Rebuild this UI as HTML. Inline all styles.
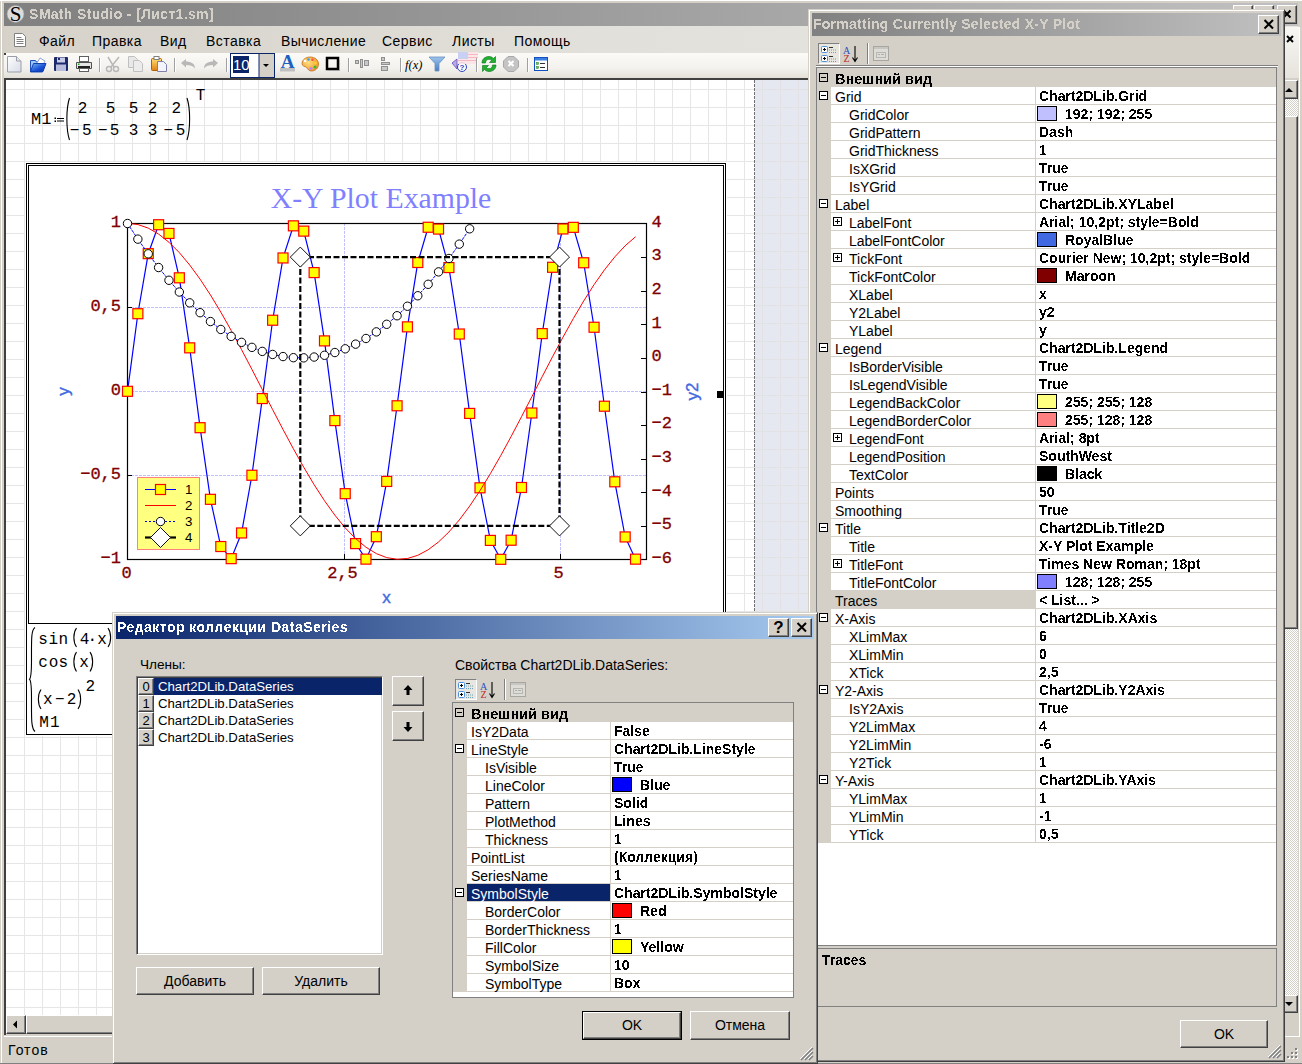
<!DOCTYPE html><html><head><meta charset="utf-8"><style>
*{margin:0;padding:0;box-sizing:border-box}
html,body{width:1302px;height:1064px;overflow:hidden}
body{position:relative;background:#d4d0c8;font-family:"Liberation Sans",sans-serif;font-size:14px;color:#000}
.a{position:absolute}
.t{white-space:pre}
svg{position:absolute;left:0;top:0;overflow:visible}
.t.b{filter:url(#crisp)}
</style></head><body><svg width="0" height="0" style="position:absolute"><defs><filter id="crisp" x="0" y="0" width="100%" height="100%"><feComponentTransfer><feFuncA type="discrete" tableValues="0 1"/></feComponentTransfer></filter><filter id="crisp2" x="0" y="0" width="100%" height="100%"><feComponentTransfer><feFuncA type="discrete" tableValues="0 1 1"/></feComponentTransfer></filter></defs></svg><div class="a" style="left:0px;top:0px;width:1302px;height:1px;background:#fff"></div>
<div class="a" style="left:1px;top:0px;width:1px;height:1064px;background:#fff"></div>
<div class="a" style="left:4px;top:3px;width:1294px;height:23px;background:linear-gradient(to right,#808080,#c0c0c0)"></div>
<svg width="1302" height="40" style="left:0;top:0"><circle cx="15.5" cy="14" r="8.5" fill="#dcdcdc" stroke="#9a9a9a" stroke-width="0.6"/><text x="15.5" y="21" text-anchor="middle" font-family="Liberation Serif" font-size="21" fill="#000">S</text></svg>
<div class="a t b" style="left:29px;top:5px;height:19px;line-height:19px;font-size:14px;font-weight:bold;letter-spacing:0.35px;color:#d4d0c8">SMath Studio - [Лист1.sm]</div>
<div class="a" style="left:1233px;top:5px;width:20px;height:19px;background:#d4d0c8;border-top:1px solid #fff;border-left:1px solid #fff;border-right:1px solid #404040;border-bottom:1px solid #404040;box-shadow:inset -1px -1px 0 #808080, inset 1px 1px 0 #d4d0c8;"></div>
<div class="a" style="left:1254px;top:5px;width:20px;height:19px;background:#d4d0c8;border-top:1px solid #fff;border-left:1px solid #fff;border-right:1px solid #404040;border-bottom:1px solid #404040;box-shadow:inset -1px -1px 0 #808080, inset 1px 1px 0 #d4d0c8;"></div>
<div class="a" style="left:1277px;top:5px;width:20px;height:19px;background:#d4d0c8;border-top:1px solid #fff;border-left:1px solid #fff;border-right:1px solid #404040;border-bottom:1px solid #404040;box-shadow:inset -1px -1px 0 #808080, inset 1px 1px 0 #d4d0c8;"></div>
<svg width="1302" height="40" style="left:0;top:0"><path d="M1283.5,10.5 L1290.5,17.5 M1290.5,10.5 L1283.5,17.5" stroke="#000" stroke-width="2"/></svg>
<div class="a" style="left:4px;top:26px;width:1294px;height:27px;background:linear-gradient(to right,#d6d2ca,#e2e0da 45%,#e8e6e1)"></div>
<div class="a t" style="left:39px;top:32px;height:18px;line-height:18px;font-size:14px;letter-spacing:0.45px">Файл</div>
<div class="a t" style="left:92px;top:32px;height:18px;line-height:18px;font-size:14px;letter-spacing:0.45px">Правка</div>
<div class="a t" style="left:160px;top:32px;height:18px;line-height:18px;font-size:14px;letter-spacing:0.45px">Вид</div>
<div class="a t" style="left:206px;top:32px;height:18px;line-height:18px;font-size:14px;letter-spacing:0.45px">Вставка</div>
<div class="a t" style="left:281px;top:32px;height:18px;line-height:18px;font-size:14px;letter-spacing:0.45px">Вычисление</div>
<div class="a t" style="left:382px;top:32px;height:18px;line-height:18px;font-size:14px;letter-spacing:0.45px">Сервис</div>
<div class="a t" style="left:452px;top:32px;height:18px;line-height:18px;font-size:14px;letter-spacing:0.45px">Листы</div>
<div class="a t" style="left:514px;top:32px;height:18px;line-height:18px;font-size:14px;letter-spacing:0.45px">Помощь</div>
<svg width="30" height="60" style="left:0;top:0"><path d="M14.5 33.5h8l3 3v10h-11z" fill="#fff" stroke="#808080"/><path d="M16.5 37.5h5M16.5 39.5h7M16.5 41.5h7M16.5 43.5h7" stroke="#808080"/></svg>
<div class="a" style="left:4px;top:53px;width:1294px;height:25px;background:linear-gradient(#fbfaf7,#f3f2ee 60%,#e2dfd7)"></div>
<div class="a" style="left:4px;top:78px;width:805px;height:957px;background:#fff;border-top:2px solid #404040;border-left:2px solid #404040"></div>
<svg width="1302" height="1064" style="left:0;top:0"><rect x="755" y="80" width="54" height="935" fill="#e5e8f1"/><rect x="24" y="80" width="1" height="935" fill="#e6e6e6"/><rect x="42" y="80" width="1" height="935" fill="#e6e6e6"/><rect x="60" y="80" width="1" height="935" fill="#e6e6e6"/><rect x="78" y="80" width="1" height="935" fill="#e6e6e6"/><rect x="96" y="80" width="1" height="935" fill="#e6e6e6"/><rect x="114" y="80" width="1" height="935" fill="#e6e6e6"/><rect x="132" y="80" width="1" height="935" fill="#e6e6e6"/><rect x="150" y="80" width="1" height="935" fill="#e6e6e6"/><rect x="168" y="80" width="1" height="935" fill="#e6e6e6"/><rect x="186" y="80" width="1" height="935" fill="#e6e6e6"/><rect x="204" y="80" width="1" height="935" fill="#e6e6e6"/><rect x="222" y="80" width="1" height="935" fill="#e6e6e6"/><rect x="240" y="80" width="1" height="935" fill="#e6e6e6"/><rect x="258" y="80" width="1" height="935" fill="#e6e6e6"/><rect x="276" y="80" width="1" height="935" fill="#e6e6e6"/><rect x="294" y="80" width="1" height="935" fill="#e6e6e6"/><rect x="312" y="80" width="1" height="935" fill="#e6e6e6"/><rect x="330" y="80" width="1" height="935" fill="#e6e6e6"/><rect x="348" y="80" width="1" height="935" fill="#e6e6e6"/><rect x="366" y="80" width="1" height="935" fill="#e6e6e6"/><rect x="384" y="80" width="1" height="935" fill="#e6e6e6"/><rect x="402" y="80" width="1" height="935" fill="#e6e6e6"/><rect x="420" y="80" width="1" height="935" fill="#e6e6e6"/><rect x="438" y="80" width="1" height="935" fill="#e6e6e6"/><rect x="456" y="80" width="1" height="935" fill="#e6e6e6"/><rect x="474" y="80" width="1" height="935" fill="#e6e6e6"/><rect x="492" y="80" width="1" height="935" fill="#e6e6e6"/><rect x="510" y="80" width="1" height="935" fill="#e6e6e6"/><rect x="528" y="80" width="1" height="935" fill="#e6e6e6"/><rect x="546" y="80" width="1" height="935" fill="#e6e6e6"/><rect x="564" y="80" width="1" height="935" fill="#e6e6e6"/><rect x="582" y="80" width="1" height="935" fill="#e6e6e6"/><rect x="600" y="80" width="1" height="935" fill="#e6e6e6"/><rect x="618" y="80" width="1" height="935" fill="#e6e6e6"/><rect x="636" y="80" width="1" height="935" fill="#e6e6e6"/><rect x="654" y="80" width="1" height="935" fill="#e6e6e6"/><rect x="672" y="80" width="1" height="935" fill="#e6e6e6"/><rect x="690" y="80" width="1" height="935" fill="#e6e6e6"/><rect x="708" y="80" width="1" height="935" fill="#e6e6e6"/><rect x="726" y="80" width="1" height="935" fill="#e6e6e6"/><rect x="744" y="80" width="1" height="935" fill="#e6e6e6"/><rect x="762" y="80" width="1" height="935" fill="#e2e2e4"/><rect x="780" y="80" width="1" height="935" fill="#e2e2e4"/><rect x="798" y="80" width="1" height="935" fill="#e2e2e4"/><rect x="6" y="89" width="749" height="1" fill="#e6e6e6"/><rect x="755" y="89" width="54" height="1" fill="#e2e2e4"/><rect x="6" y="107" width="749" height="1" fill="#e6e6e6"/><rect x="755" y="107" width="54" height="1" fill="#e2e2e4"/><rect x="6" y="125" width="749" height="1" fill="#e6e6e6"/><rect x="755" y="125" width="54" height="1" fill="#e2e2e4"/><rect x="6" y="143" width="749" height="1" fill="#e6e6e6"/><rect x="755" y="143" width="54" height="1" fill="#e2e2e4"/><rect x="6" y="161" width="749" height="1" fill="#e6e6e6"/><rect x="755" y="161" width="54" height="1" fill="#e2e2e4"/><rect x="6" y="179" width="749" height="1" fill="#e6e6e6"/><rect x="755" y="179" width="54" height="1" fill="#e2e2e4"/><rect x="6" y="197" width="749" height="1" fill="#e6e6e6"/><rect x="755" y="197" width="54" height="1" fill="#e2e2e4"/><rect x="6" y="215" width="749" height="1" fill="#e6e6e6"/><rect x="755" y="215" width="54" height="1" fill="#e2e2e4"/><rect x="6" y="233" width="749" height="1" fill="#e6e6e6"/><rect x="755" y="233" width="54" height="1" fill="#e2e2e4"/><rect x="6" y="251" width="749" height="1" fill="#e6e6e6"/><rect x="755" y="251" width="54" height="1" fill="#e2e2e4"/><rect x="6" y="269" width="749" height="1" fill="#e6e6e6"/><rect x="755" y="269" width="54" height="1" fill="#e2e2e4"/><rect x="6" y="287" width="749" height="1" fill="#e6e6e6"/><rect x="755" y="287" width="54" height="1" fill="#e2e2e4"/><rect x="6" y="305" width="749" height="1" fill="#e6e6e6"/><rect x="755" y="305" width="54" height="1" fill="#e2e2e4"/><rect x="6" y="323" width="749" height="1" fill="#e6e6e6"/><rect x="755" y="323" width="54" height="1" fill="#e2e2e4"/><rect x="6" y="341" width="749" height="1" fill="#e6e6e6"/><rect x="755" y="341" width="54" height="1" fill="#e2e2e4"/><rect x="6" y="359" width="749" height="1" fill="#e6e6e6"/><rect x="755" y="359" width="54" height="1" fill="#e2e2e4"/><rect x="6" y="377" width="749" height="1" fill="#e6e6e6"/><rect x="755" y="377" width="54" height="1" fill="#e2e2e4"/><rect x="6" y="395" width="749" height="1" fill="#e6e6e6"/><rect x="755" y="395" width="54" height="1" fill="#e2e2e4"/><rect x="6" y="413" width="749" height="1" fill="#e6e6e6"/><rect x="755" y="413" width="54" height="1" fill="#e2e2e4"/><rect x="6" y="431" width="749" height="1" fill="#e6e6e6"/><rect x="755" y="431" width="54" height="1" fill="#e2e2e4"/><rect x="6" y="449" width="749" height="1" fill="#e6e6e6"/><rect x="755" y="449" width="54" height="1" fill="#e2e2e4"/><rect x="6" y="467" width="749" height="1" fill="#e6e6e6"/><rect x="755" y="467" width="54" height="1" fill="#e2e2e4"/><rect x="6" y="485" width="749" height="1" fill="#e6e6e6"/><rect x="755" y="485" width="54" height="1" fill="#e2e2e4"/><rect x="6" y="503" width="749" height="1" fill="#e6e6e6"/><rect x="755" y="503" width="54" height="1" fill="#e2e2e4"/><rect x="6" y="521" width="749" height="1" fill="#e6e6e6"/><rect x="755" y="521" width="54" height="1" fill="#e2e2e4"/><rect x="6" y="539" width="749" height="1" fill="#e6e6e6"/><rect x="755" y="539" width="54" height="1" fill="#e2e2e4"/><rect x="6" y="557" width="749" height="1" fill="#e6e6e6"/><rect x="755" y="557" width="54" height="1" fill="#e2e2e4"/><rect x="6" y="575" width="749" height="1" fill="#e6e6e6"/><rect x="755" y="575" width="54" height="1" fill="#e2e2e4"/><rect x="6" y="593" width="749" height="1" fill="#e6e6e6"/><rect x="755" y="593" width="54" height="1" fill="#e2e2e4"/><rect x="6" y="611" width="749" height="1" fill="#e6e6e6"/><rect x="755" y="611" width="54" height="1" fill="#e2e2e4"/><rect x="6" y="629" width="749" height="1" fill="#e6e6e6"/><rect x="755" y="629" width="54" height="1" fill="#e2e2e4"/><rect x="6" y="647" width="749" height="1" fill="#e6e6e6"/><rect x="755" y="647" width="54" height="1" fill="#e2e2e4"/><rect x="6" y="665" width="749" height="1" fill="#e6e6e6"/><rect x="755" y="665" width="54" height="1" fill="#e2e2e4"/><rect x="6" y="683" width="749" height="1" fill="#e6e6e6"/><rect x="755" y="683" width="54" height="1" fill="#e2e2e4"/><rect x="6" y="701" width="749" height="1" fill="#e6e6e6"/><rect x="755" y="701" width="54" height="1" fill="#e2e2e4"/><rect x="6" y="719" width="749" height="1" fill="#e6e6e6"/><rect x="755" y="719" width="54" height="1" fill="#e2e2e4"/><rect x="6" y="737" width="749" height="1" fill="#e6e6e6"/><rect x="755" y="737" width="54" height="1" fill="#e2e2e4"/><rect x="6" y="755" width="749" height="1" fill="#e6e6e6"/><rect x="755" y="755" width="54" height="1" fill="#e2e2e4"/><rect x="6" y="773" width="749" height="1" fill="#e6e6e6"/><rect x="755" y="773" width="54" height="1" fill="#e2e2e4"/><rect x="6" y="791" width="749" height="1" fill="#e6e6e6"/><rect x="755" y="791" width="54" height="1" fill="#e2e2e4"/><rect x="6" y="809" width="749" height="1" fill="#e6e6e6"/><rect x="755" y="809" width="54" height="1" fill="#e2e2e4"/><rect x="6" y="827" width="749" height="1" fill="#e6e6e6"/><rect x="755" y="827" width="54" height="1" fill="#e2e2e4"/><rect x="6" y="845" width="749" height="1" fill="#e6e6e6"/><rect x="755" y="845" width="54" height="1" fill="#e2e2e4"/><rect x="6" y="863" width="749" height="1" fill="#e6e6e6"/><rect x="755" y="863" width="54" height="1" fill="#e2e2e4"/><rect x="6" y="881" width="749" height="1" fill="#e6e6e6"/><rect x="755" y="881" width="54" height="1" fill="#e2e2e4"/><rect x="6" y="899" width="749" height="1" fill="#e6e6e6"/><rect x="755" y="899" width="54" height="1" fill="#e2e2e4"/><rect x="6" y="917" width="749" height="1" fill="#e6e6e6"/><rect x="755" y="917" width="54" height="1" fill="#e2e2e4"/><rect x="6" y="935" width="749" height="1" fill="#e6e6e6"/><rect x="755" y="935" width="54" height="1" fill="#e2e2e4"/><rect x="6" y="953" width="749" height="1" fill="#e6e6e6"/><rect x="755" y="953" width="54" height="1" fill="#e2e2e4"/><rect x="6" y="971" width="749" height="1" fill="#e6e6e6"/><rect x="755" y="971" width="54" height="1" fill="#e2e2e4"/><rect x="6" y="989" width="749" height="1" fill="#e6e6e6"/><rect x="755" y="989" width="54" height="1" fill="#e2e2e4"/><rect x="6" y="1007" width="749" height="1" fill="#e6e6e6"/><rect x="755" y="1007" width="54" height="1" fill="#e2e2e4"/><line x1="754.5" y1="80" x2="754.5" y2="1015" stroke="#707070" stroke-width="1" stroke-dasharray="3,1"/></svg>
<svg width="1302" height="1064" style="left:0;top:0"><rect x="25" y="162" width="702" height="574" fill="#fff"/><rect x="26.5" y="163.5" width="699" height="571" fill="none" stroke="#000"/><rect x="28.5" y="165.5" width="695" height="458" fill="none" stroke="#000"/><rect x="717" y="391" width="7" height="7" fill="#000"/><text x="381" y="208" text-anchor="middle" font-family="Liberation Serif" font-size="29.8" fill="#8080ff">X-Y Plot Example</text><line x1="344.5" y1="223" x2="344.5" y2="559" stroke="#c0c0ff" stroke-dasharray="3,1"/><line x1="560.5" y1="223" x2="560.5" y2="559" stroke="#c0c0ff" stroke-dasharray="3,1"/><line x1="127" y1="307.5" x2="646" y2="307.5" stroke="#c0c0ff" stroke-dasharray="3,1"/><line x1="127" y1="391.5" x2="646" y2="391.5" stroke="#c0c0ff" stroke-dasharray="3,1"/><line x1="127" y1="475.5" x2="646" y2="475.5" stroke="#c0c0ff" stroke-dasharray="3,1"/><line x1="127" y1="307.5" x2="132" y2="307.5" stroke="#000"/><line x1="127" y1="391.5" x2="132" y2="391.5" stroke="#000"/><line x1="127" y1="475.5" x2="132" y2="475.5" stroke="#000"/><line x1="641" y1="526.5" x2="646" y2="526.5" stroke="#000"/><line x1="641" y1="492.5" x2="646" y2="492.5" stroke="#000"/><line x1="641" y1="459.5" x2="646" y2="459.5" stroke="#000"/><line x1="641" y1="425.5" x2="646" y2="425.5" stroke="#000"/><line x1="641" y1="392.5" x2="646" y2="392.5" stroke="#000"/><line x1="641" y1="358.5" x2="646" y2="358.5" stroke="#000"/><line x1="641" y1="324.5" x2="646" y2="324.5" stroke="#000"/><line x1="641" y1="291.5" x2="646" y2="291.5" stroke="#000"/><line x1="641" y1="257.5" x2="646" y2="257.5" stroke="#000"/><line x1="344.5" y1="554" x2="344.5" y2="559" stroke="#000"/><line x1="560.5" y1="554" x2="560.5" y2="559" stroke="#000"/><rect x="127.5" y="223.5" width="519" height="336" fill="none" stroke="#000" stroke-width="1.2"/><text x="121" y="227.10000000000002" text-anchor="end" font-family="Liberation Mono" font-size="17" fill="#800000" stroke="#800000" stroke-width="0.3">1</text><text x="121" y="311.1" text-anchor="end" font-family="Liberation Mono" font-size="17" fill="#800000" stroke="#800000" stroke-width="0.3">0,5</text><text x="121" y="395.1" text-anchor="end" font-family="Liberation Mono" font-size="17" fill="#800000" stroke="#800000" stroke-width="0.3">0</text><text x="121" y="479.1" text-anchor="end" font-family="Liberation Mono" font-size="17" fill="#800000" stroke="#800000" stroke-width="0.3">−0,5</text><text x="121" y="563.0999999999999" text-anchor="end" font-family="Liberation Mono" font-size="17" fill="#800000" stroke="#800000" stroke-width="0.3">−1</text><text x="651.5" y="562.8" font-family="Liberation Mono" font-size="17" fill="#800000" stroke="#800000" stroke-width="0.3">−6</text><text x="651.5" y="529.2" font-family="Liberation Mono" font-size="17" fill="#800000" stroke="#800000" stroke-width="0.3">−5</text><text x="651.5" y="495.6" font-family="Liberation Mono" font-size="17" fill="#800000" stroke="#800000" stroke-width="0.3">−4</text><text x="651.5" y="462.00000000000006" font-family="Liberation Mono" font-size="17" fill="#800000" stroke="#800000" stroke-width="0.3">−3</text><text x="651.5" y="428.40000000000003" font-family="Liberation Mono" font-size="17" fill="#800000" stroke="#800000" stroke-width="0.3">−2</text><text x="651.5" y="394.8" font-family="Liberation Mono" font-size="17" fill="#800000" stroke="#800000" stroke-width="0.3">−1</text><text x="651.5" y="361.2" font-family="Liberation Mono" font-size="17" fill="#800000" stroke="#800000" stroke-width="0.3">0</text><text x="651.5" y="327.6" font-family="Liberation Mono" font-size="17" fill="#800000" stroke="#800000" stroke-width="0.3">1</text><text x="651.5" y="294.0" font-family="Liberation Mono" font-size="17" fill="#800000" stroke="#800000" stroke-width="0.3">2</text><text x="651.5" y="260.40000000000003" font-family="Liberation Mono" font-size="17" fill="#800000" stroke="#800000" stroke-width="0.3">3</text><text x="651.5" y="226.8" font-family="Liberation Mono" font-size="17" fill="#800000" stroke="#800000" stroke-width="0.3">4</text><text x="126.5" y="578" text-anchor="middle" font-family="Liberation Mono" font-size="17" fill="#800000" stroke="#800000" stroke-width="0.3">0</text><text x="342.5" y="578" text-anchor="middle" font-family="Liberation Mono" font-size="17" fill="#800000" stroke="#800000" stroke-width="0.3">2,5</text><text x="558.5" y="578" text-anchor="middle" font-family="Liberation Mono" font-size="17" fill="#800000" stroke="#800000" stroke-width="0.3">5</text><text x="386.5" y="603" text-anchor="middle" font-family="Liberation Sans" font-size="17" fill="#4169e1" stroke="#4169e1" stroke-width="0.4">x</text><text transform="translate(69,391.5) rotate(-90)" text-anchor="middle" font-family="Liberation Sans" font-size="17" fill="#4169e1" stroke="#4169e1" stroke-width="0.4">y</text><text transform="translate(698,391.5) rotate(-90)" text-anchor="middle" font-family="Liberation Sans" font-size="17" fill="#4169e1" stroke="#4169e1" stroke-width="0.4">y2</text><polyline fill="none" stroke="#0000ff" stroke-width="1.2" points="127.50,391.30 137.87,313.72 148.24,253.68 158.60,224.73 168.97,233.44 179.34,277.82 189.71,347.85 200.08,427.70 210.44,499.32 220.81,546.53 231.18,558.66 241.55,532.96 251.92,475.24 262.28,398.55 272.65,320.23 283.02,257.96 293.39,225.84 303.76,231.11 314.12,272.58 324.49,340.89 334.86,420.59 345.23,493.67 355.60,543.61 365.96,559.13 376.33,536.72 386.70,481.44 397.07,405.79 407.44,326.86 417.80,262.50 428.17,227.25 438.54,229.07 448.91,267.56 459.28,334.01 469.64,413.42 480.01,487.82 490.38,540.41 500.75,559.30 511.12,540.22 521.48,487.48 531.85,413.00 542.22,333.62 552.59,267.28 562.96,228.96 573.32,227.34 583.69,262.77 594.06,327.25 604.43,406.21 614.80,481.80 625.16,536.93 635.53,559.15"/><rect x="122.50" y="386.30" width="10" height="10" fill="#ffff00" stroke="#ff0000" stroke-width="1.2"/><rect x="132.87" y="308.72" width="10" height="10" fill="#ffff00" stroke="#ff0000" stroke-width="1.2"/><rect x="143.24" y="248.68" width="10" height="10" fill="#ffff00" stroke="#ff0000" stroke-width="1.2"/><rect x="153.60" y="219.73" width="10" height="10" fill="#ffff00" stroke="#ff0000" stroke-width="1.2"/><rect x="163.97" y="228.44" width="10" height="10" fill="#ffff00" stroke="#ff0000" stroke-width="1.2"/><rect x="174.34" y="272.82" width="10" height="10" fill="#ffff00" stroke="#ff0000" stroke-width="1.2"/><rect x="184.71" y="342.85" width="10" height="10" fill="#ffff00" stroke="#ff0000" stroke-width="1.2"/><rect x="195.08" y="422.70" width="10" height="10" fill="#ffff00" stroke="#ff0000" stroke-width="1.2"/><rect x="205.44" y="494.32" width="10" height="10" fill="#ffff00" stroke="#ff0000" stroke-width="1.2"/><rect x="215.81" y="541.53" width="10" height="10" fill="#ffff00" stroke="#ff0000" stroke-width="1.2"/><rect x="226.18" y="553.66" width="10" height="10" fill="#ffff00" stroke="#ff0000" stroke-width="1.2"/><rect x="236.55" y="527.96" width="10" height="10" fill="#ffff00" stroke="#ff0000" stroke-width="1.2"/><rect x="246.92" y="470.24" width="10" height="10" fill="#ffff00" stroke="#ff0000" stroke-width="1.2"/><rect x="257.28" y="393.55" width="10" height="10" fill="#ffff00" stroke="#ff0000" stroke-width="1.2"/><rect x="267.65" y="315.23" width="10" height="10" fill="#ffff00" stroke="#ff0000" stroke-width="1.2"/><rect x="278.02" y="252.96" width="10" height="10" fill="#ffff00" stroke="#ff0000" stroke-width="1.2"/><rect x="288.39" y="220.84" width="10" height="10" fill="#ffff00" stroke="#ff0000" stroke-width="1.2"/><rect x="298.76" y="226.11" width="10" height="10" fill="#ffff00" stroke="#ff0000" stroke-width="1.2"/><rect x="309.12" y="267.58" width="10" height="10" fill="#ffff00" stroke="#ff0000" stroke-width="1.2"/><rect x="319.49" y="335.89" width="10" height="10" fill="#ffff00" stroke="#ff0000" stroke-width="1.2"/><rect x="329.86" y="415.59" width="10" height="10" fill="#ffff00" stroke="#ff0000" stroke-width="1.2"/><rect x="340.23" y="488.67" width="10" height="10" fill="#ffff00" stroke="#ff0000" stroke-width="1.2"/><rect x="350.60" y="538.61" width="10" height="10" fill="#ffff00" stroke="#ff0000" stroke-width="1.2"/><rect x="360.96" y="554.13" width="10" height="10" fill="#ffff00" stroke="#ff0000" stroke-width="1.2"/><rect x="371.33" y="531.72" width="10" height="10" fill="#ffff00" stroke="#ff0000" stroke-width="1.2"/><rect x="381.70" y="476.44" width="10" height="10" fill="#ffff00" stroke="#ff0000" stroke-width="1.2"/><rect x="392.07" y="400.79" width="10" height="10" fill="#ffff00" stroke="#ff0000" stroke-width="1.2"/><rect x="402.44" y="321.86" width="10" height="10" fill="#ffff00" stroke="#ff0000" stroke-width="1.2"/><rect x="412.80" y="257.50" width="10" height="10" fill="#ffff00" stroke="#ff0000" stroke-width="1.2"/><rect x="423.17" y="222.25" width="10" height="10" fill="#ffff00" stroke="#ff0000" stroke-width="1.2"/><rect x="433.54" y="224.07" width="10" height="10" fill="#ffff00" stroke="#ff0000" stroke-width="1.2"/><rect x="443.91" y="262.56" width="10" height="10" fill="#ffff00" stroke="#ff0000" stroke-width="1.2"/><rect x="454.28" y="329.01" width="10" height="10" fill="#ffff00" stroke="#ff0000" stroke-width="1.2"/><rect x="464.64" y="408.42" width="10" height="10" fill="#ffff00" stroke="#ff0000" stroke-width="1.2"/><rect x="475.01" y="482.82" width="10" height="10" fill="#ffff00" stroke="#ff0000" stroke-width="1.2"/><rect x="485.38" y="535.41" width="10" height="10" fill="#ffff00" stroke="#ff0000" stroke-width="1.2"/><rect x="495.75" y="554.30" width="10" height="10" fill="#ffff00" stroke="#ff0000" stroke-width="1.2"/><rect x="506.12" y="535.22" width="10" height="10" fill="#ffff00" stroke="#ff0000" stroke-width="1.2"/><rect x="516.48" y="482.48" width="10" height="10" fill="#ffff00" stroke="#ff0000" stroke-width="1.2"/><rect x="526.85" y="408.00" width="10" height="10" fill="#ffff00" stroke="#ff0000" stroke-width="1.2"/><rect x="537.22" y="328.62" width="10" height="10" fill="#ffff00" stroke="#ff0000" stroke-width="1.2"/><rect x="547.59" y="262.28" width="10" height="10" fill="#ffff00" stroke="#ff0000" stroke-width="1.2"/><rect x="557.96" y="223.96" width="10" height="10" fill="#ffff00" stroke="#ff0000" stroke-width="1.2"/><rect x="568.32" y="222.34" width="10" height="10" fill="#ffff00" stroke="#ff0000" stroke-width="1.2"/><rect x="578.69" y="257.77" width="10" height="10" fill="#ffff00" stroke="#ff0000" stroke-width="1.2"/><rect x="589.06" y="322.25" width="10" height="10" fill="#ffff00" stroke="#ff0000" stroke-width="1.2"/><rect x="599.43" y="401.21" width="10" height="10" fill="#ffff00" stroke="#ff0000" stroke-width="1.2"/><rect x="609.80" y="476.80" width="10" height="10" fill="#ffff00" stroke="#ff0000" stroke-width="1.2"/><rect x="620.16" y="531.93" width="10" height="10" fill="#ffff00" stroke="#ff0000" stroke-width="1.2"/><rect x="630.53" y="554.15" width="10" height="10" fill="#ffff00" stroke="#ff0000" stroke-width="1.2"/><polyline fill="none" stroke="#ff0000" stroke-width="1" points="127.50,223.30 137.87,224.51 148.24,228.12 158.60,234.07 168.97,242.28 179.34,252.64 189.71,265.00 200.08,279.17 210.44,294.95 220.81,312.12 231.18,330.42 241.55,349.61 251.92,369.39 262.28,389.49 272.65,409.61 283.02,429.47 293.39,448.78 303.76,467.27 314.12,484.66 324.49,500.71 334.86,515.18 345.23,527.88 355.60,538.61 365.96,547.22 376.33,553.58 386.70,557.62 397.07,559.26 407.44,558.49 417.80,555.31 428.17,549.77 438.54,541.96 448.91,531.97 459.28,519.97 469.64,506.11 480.01,490.60 490.38,473.66 500.75,455.54 511.12,436.50 521.48,416.80 531.85,396.74 542.22,376.60 552.59,356.67 562.96,337.24 573.32,318.59 583.69,300.98 594.06,284.67 604.43,269.90 614.80,256.87 625.16,245.77 635.53,236.77"/><polyline fill="none" stroke="#0000ff" stroke-width="1" stroke-dasharray="3,1" points="127.50,223.50 137.87,239.14 148.24,253.82 158.60,267.53 168.97,280.27 179.34,292.04 189.71,302.85 200.08,312.69 210.44,321.56 220.81,329.46 231.18,336.40 241.55,342.36 251.92,347.36 262.28,351.40 272.65,354.46 283.02,356.56 293.39,357.68 303.76,357.85 314.12,357.04 324.49,355.27 334.86,352.52 345.23,348.81 355.60,344.14 365.96,338.49 376.33,331.88 386.70,324.30 397.07,315.75 407.44,306.24 417.80,295.75 428.17,284.30 438.54,271.88 448.91,258.50 459.28,244.14 469.64,228.82"/><circle cx="127.50" cy="223.50" r="4.2" fill="#fff" stroke="#000" stroke-width="1"/><circle cx="137.87" cy="239.14" r="4.2" fill="#fff" stroke="#000" stroke-width="1"/><circle cx="148.24" cy="253.82" r="4.2" fill="#fff" stroke="#000" stroke-width="1"/><circle cx="158.60" cy="267.53" r="4.2" fill="#fff" stroke="#000" stroke-width="1"/><circle cx="168.97" cy="280.27" r="4.2" fill="#fff" stroke="#000" stroke-width="1"/><circle cx="179.34" cy="292.04" r="4.2" fill="#fff" stroke="#000" stroke-width="1"/><circle cx="189.71" cy="302.85" r="4.2" fill="#fff" stroke="#000" stroke-width="1"/><circle cx="200.08" cy="312.69" r="4.2" fill="#fff" stroke="#000" stroke-width="1"/><circle cx="210.44" cy="321.56" r="4.2" fill="#fff" stroke="#000" stroke-width="1"/><circle cx="220.81" cy="329.46" r="4.2" fill="#fff" stroke="#000" stroke-width="1"/><circle cx="231.18" cy="336.40" r="4.2" fill="#fff" stroke="#000" stroke-width="1"/><circle cx="241.55" cy="342.36" r="4.2" fill="#fff" stroke="#000" stroke-width="1"/><circle cx="251.92" cy="347.36" r="4.2" fill="#fff" stroke="#000" stroke-width="1"/><circle cx="262.28" cy="351.40" r="4.2" fill="#fff" stroke="#000" stroke-width="1"/><circle cx="272.65" cy="354.46" r="4.2" fill="#fff" stroke="#000" stroke-width="1"/><circle cx="283.02" cy="356.56" r="4.2" fill="#fff" stroke="#000" stroke-width="1"/><circle cx="293.39" cy="357.68" r="4.2" fill="#fff" stroke="#000" stroke-width="1"/><circle cx="303.76" cy="357.85" r="4.2" fill="#fff" stroke="#000" stroke-width="1"/><circle cx="314.12" cy="357.04" r="4.2" fill="#fff" stroke="#000" stroke-width="1"/><circle cx="324.49" cy="355.27" r="4.2" fill="#fff" stroke="#000" stroke-width="1"/><circle cx="334.86" cy="352.52" r="4.2" fill="#fff" stroke="#000" stroke-width="1"/><circle cx="345.23" cy="348.81" r="4.2" fill="#fff" stroke="#000" stroke-width="1"/><circle cx="355.60" cy="344.14" r="4.2" fill="#fff" stroke="#000" stroke-width="1"/><circle cx="365.96" cy="338.49" r="4.2" fill="#fff" stroke="#000" stroke-width="1"/><circle cx="376.33" cy="331.88" r="4.2" fill="#fff" stroke="#000" stroke-width="1"/><circle cx="386.70" cy="324.30" r="4.2" fill="#fff" stroke="#000" stroke-width="1"/><circle cx="397.07" cy="315.75" r="4.2" fill="#fff" stroke="#000" stroke-width="1"/><circle cx="407.44" cy="306.24" r="4.2" fill="#fff" stroke="#000" stroke-width="1"/><circle cx="417.80" cy="295.75" r="4.2" fill="#fff" stroke="#000" stroke-width="1"/><circle cx="428.17" cy="284.30" r="4.2" fill="#fff" stroke="#000" stroke-width="1"/><circle cx="438.54" cy="271.88" r="4.2" fill="#fff" stroke="#000" stroke-width="1"/><circle cx="448.91" cy="258.50" r="4.2" fill="#fff" stroke="#000" stroke-width="1"/><circle cx="459.28" cy="244.14" r="4.2" fill="#fff" stroke="#000" stroke-width="1"/><circle cx="469.64" cy="228.82" r="4.2" fill="#fff" stroke="#000" stroke-width="1"/><polyline fill="none" stroke="#000" stroke-width="2.2" stroke-dasharray="6,2.5" points="300.30,525.90 559.50,525.90 559.50,257.10 300.30,257.10 300.30,525.90"/><path d="M290.30,525.90 L300.30,515.90 L310.30,525.90 L300.30,535.90 Z" fill="#fff" stroke="#111" stroke-width="1"/><path d="M549.50,525.90 L559.50,515.90 L569.50,525.90 L559.50,535.90 Z" fill="#fff" stroke="#111" stroke-width="1"/><path d="M549.50,257.10 L559.50,247.10 L569.50,257.10 L559.50,267.10 Z" fill="#fff" stroke="#111" stroke-width="1"/><path d="M290.30,257.10 L300.30,247.10 L310.30,257.10 L300.30,267.10 Z" fill="#fff" stroke="#111" stroke-width="1"/><rect x="137.5" y="477.5" width="62" height="72" fill="#ffff80" stroke="#ff8080"/><line x1="145" y1="489.5" x2="176" y2="489.5" stroke="#0000ff"/><rect x="155.5" y="484.5" width="10" height="10" fill="#ffff00" stroke="#ff0000" stroke-width="1.2"/><line x1="145" y1="505.5" x2="176" y2="505.5" stroke="#ff0000"/><line x1="145" y1="521.5" x2="176" y2="521.5" stroke="#0000ff" stroke-dasharray="2,2"/><circle cx="160.5" cy="521.5" r="4.2" fill="#fff" stroke="#000"/><line x1="145" y1="537.5" x2="176" y2="537.5" stroke="#000" stroke-width="2.2"/><path d="M150.5,537.5 L160.5,527.5 L170.5,537.5 L160.5,547.5 Z" fill="#fff" stroke="#111"/><text x="185" y="494.0" font-family="Liberation Sans" font-size="13.3" fill="#000">1</text><text x="185" y="510.0" font-family="Liberation Sans" font-size="13.3" fill="#000">2</text><text x="185" y="526.0" font-family="Liberation Sans" font-size="13.3" fill="#000">3</text><text x="185" y="542.0" font-family="Liberation Sans" font-size="13.3" fill="#000">4</text></svg>
<svg width="1302" height="1064" style="left:0;top:0"><text x="36.2" y="123.5" text-anchor="middle" font-family="Liberation Mono" font-size="17" fill="#000">M</text><text x="46.3" y="123.5" text-anchor="middle" font-family="Liberation Mono" font-size="17" fill="#000">1</text><rect x="54.5" y="117.5" width="1.5" height="1.5" fill="#000"/><rect x="54.5" y="120.5" width="1.5" height="1.5" fill="#000"/><path d="M57,118.5 h7 M57,121 h7" stroke="#000" stroke-width="1"/><path d="M69.5,98 C66.0,108.5 66.0,129.5 69.5,140" fill="none" stroke="#000" stroke-width="1.1"/><path d="M187,98 C190.5,108.5 190.5,129.5 187,140" fill="none" stroke="#000" stroke-width="1.1"/><text x="82.5" y="112.8" text-anchor="middle" font-family="Liberation Mono" font-size="16" fill="#000">2</text><text x="110.5" y="112.8" text-anchor="middle" font-family="Liberation Mono" font-size="16" fill="#000">5</text><text x="133.6" y="112.8" text-anchor="middle" font-family="Liberation Mono" font-size="16" fill="#000">5</text><text x="152.6" y="112.8" text-anchor="middle" font-family="Liberation Mono" font-size="16" fill="#000">2</text><text x="176.2" y="112.8" text-anchor="middle" font-family="Liberation Mono" font-size="16" fill="#000">2</text><text x="74.5" y="134.8" text-anchor="middle" font-family="Liberation Mono" font-size="16" fill="#000">−</text><text x="86.7" y="134.8" text-anchor="middle" font-family="Liberation Mono" font-size="16" fill="#000">5</text><text x="102.7" y="134.8" text-anchor="middle" font-family="Liberation Mono" font-size="16" fill="#000">−</text><text x="114.6" y="134.8" text-anchor="middle" font-family="Liberation Mono" font-size="16" fill="#000">5</text><text x="133.6" y="134.8" text-anchor="middle" font-family="Liberation Mono" font-size="16" fill="#000">3</text><text x="152.6" y="134.8" text-anchor="middle" font-family="Liberation Mono" font-size="16" fill="#000">3</text><text x="168.4" y="134.8" text-anchor="middle" font-family="Liberation Mono" font-size="16" fill="#000">−</text><text x="180.5" y="134.8" text-anchor="middle" font-family="Liberation Mono" font-size="16" fill="#000">5</text><text x="200.5" y="99.5" text-anchor="middle" font-family="Liberation Mono" font-size="16" fill="#000">T</text><path d="M35,627.5 C31,630 31.5,640 31.5,660 C31.5,674 31,678 29.5,679.3 C31,680.5 31.5,684 31.5,698 C31.5,718 31,728 35,731.5" fill="none" stroke="#000" stroke-width="1.1"/><text x="43" y="643.5" text-anchor="middle" font-family="Liberation Mono" font-size="16" fill="#000">s</text><text x="53.2" y="643.5" text-anchor="middle" font-family="Liberation Mono" font-size="16" fill="#000">i</text><text x="63.3" y="643.5" text-anchor="middle" font-family="Liberation Mono" font-size="16" fill="#000">n</text><text x="84.5" y="643.5" text-anchor="middle" font-family="Liberation Mono" font-size="16" fill="#000">4</text><text x="92.3" y="643.5" text-anchor="middle" font-family="Liberation Mono" font-size="16" fill="#000">·</text><text x="102" y="643.5" text-anchor="middle" font-family="Liberation Mono" font-size="16" fill="#000">x</text><path d="M76.5,628 C73.0,632.75 73.0,642.25 76.5,647" fill="none" stroke="#000" stroke-width="1.1"/><path d="M108,628 C111.5,632.75 111.5,642.25 108,647" fill="none" stroke="#000" stroke-width="1.1"/><text x="43" y="667" text-anchor="middle" font-family="Liberation Mono" font-size="16" fill="#000">c</text><text x="53.5" y="667" text-anchor="middle" font-family="Liberation Mono" font-size="16" fill="#000">o</text><text x="63.3" y="667" text-anchor="middle" font-family="Liberation Mono" font-size="16" fill="#000">s</text><text x="84" y="667" text-anchor="middle" font-family="Liberation Mono" font-size="16" fill="#000">x</text><path d="M76.5,652 C73.0,656.875 73.0,666.625 76.5,671.5" fill="none" stroke="#000" stroke-width="1.1"/><path d="M90,652 C93.5,656.875 93.5,666.625 90,671.5" fill="none" stroke="#000" stroke-width="1.1"/><path d="M41,689.5 C37.5,694.375 37.5,704.125 41,709" fill="none" stroke="#000" stroke-width="1.1"/><path d="M78,689.5 C81.5,694.375 81.5,704.125 78,709" fill="none" stroke="#000" stroke-width="1.1"/><text x="47.8" y="703.5" text-anchor="middle" font-family="Liberation Mono" font-size="16" fill="#000">x</text><text x="59.7" y="703.5" text-anchor="middle" font-family="Liberation Mono" font-size="16" fill="#000">−</text><text x="71.5" y="703.5" text-anchor="middle" font-family="Liberation Mono" font-size="16" fill="#000">2</text><text x="90.3" y="690.5" text-anchor="middle" font-family="Liberation Mono" font-size="16" fill="#000">2</text><text x="44.1" y="726.5" text-anchor="middle" font-family="Liberation Mono" font-size="16" fill="#000">M</text><text x="54.7" y="726.5" text-anchor="middle" font-family="Liberation Mono" font-size="16" fill="#000">1</text></svg>
<div class="a" style="left:6px;top:1015px;width:803px;height:20px;background:#d4d0c8"></div>
<div class="a" style="left:6px;top:1015px;width:20px;height:19px;background:#d4d0c8;border-top:1px solid #fff;border-left:1px solid #fff;border-right:1px solid #404040;border-bottom:1px solid #404040;box-shadow:inset -1px -1px 0 #808080, inset 1px 1px 0 #d4d0c8;"><svg width="18" height="17"><path d="M6,8.5 L10,4.5 L10,12.5Z" fill="#000"/></svg></div>
<div class="a" style="left:26px;top:1015px;width:783px;height:19px;background:#d4d0c8;border-top:1px solid #fff;border-left:1px solid #fff;border-right:1px solid #404040;border-bottom:1px solid #404040;box-shadow:inset -1px -1px 0 #808080, inset 1px 1px 0 #d4d0c8;"></div>
<div class="a" style="left:4px;top:1036px;width:1294px;height:1px;background:#fff"></div>
<div class="a t" style="left:8px;top:1041px;height:18px;line-height:18px;font-size:14px;letter-spacing:1px">Готов</div>
<div class="a" style="left:0px;top:1063px;width:1302px;height:1px;background:#808080"></div>
<div class="a" style="left:1279px;top:80px;width:19px;height:935px;background:repeating-conic-gradient(#d4d0c8 0 25%,#ffffff 0 50%) 0 0/2px 2px"></div>
<div class="a" style="left:1279px;top:80px;width:19px;height:19px;background:#d4d0c8;border-top:1px solid #fff;border-left:1px solid #fff;border-right:1px solid #404040;border-bottom:1px solid #404040;box-shadow:inset -1px -1px 0 #808080, inset 1px 1px 0 #d4d0c8;"><svg width="17" height="17"><path d="M5,11 L9,7 L13,11Z" fill="#000"/></svg></div>
<div class="a" style="left:1279px;top:116px;width:19px;height:513px;background:#d4d0c8;border-top:1px solid #fff;border-left:1px solid #fff;border-right:1px solid #404040;border-bottom:1px solid #404040;box-shadow:inset -1px -1px 0 #808080, inset 1px 1px 0 #d4d0c8;"></div>
<div class="a" style="left:1279px;top:995px;width:19px;height:18px;background:#d4d0c8;border-top:1px solid #fff;border-left:1px solid #fff;border-right:1px solid #404040;border-bottom:1px solid #404040;box-shadow:inset -1px -1px 0 #808080, inset 1px 1px 0 #d4d0c8;"><svg width="17" height="16"><path d="M5,6 L9,10 L13,6Z" fill="#000"/></svg></div>
<div class="a" style="left:1279px;top:1013px;width:20px;height:24px;background:#d4d0c8;border-bottom:1px solid #fff"></div>
<div class="a" style="left:1299px;top:27px;width:1px;height:1010px;background:#fff"></div>
<div class="a" style="left:1285px;top:27px;width:14px;height:51px;background:linear-gradient(#f8f7f4,#e6e3dc)"></div>
<svg width="1302" height="1064" style="left:0;top:0"><path d="M1287,36 L1293,42 M1293,36 L1287,42" stroke="#000" stroke-width="2"/></svg>
<div class="a" style="left:808px;top:9px;width:477px;height:1053px;background:#d4d0c8;border-top:1px solid #d4d0c8;border-left:1px solid #d4d0c8;border-right:1px solid #404040;border-bottom:1px solid #404040;box-shadow:inset 1px 1px 0 #fff, inset -1px -1px 0 #808080"></div>
<div class="a" style="left:812px;top:13px;width:469px;height:23px;background:linear-gradient(to right,#808080,#c0c0c0)"></div>
<div class="a t b" style="left:813px;top:14px;height:21px;line-height:21px;font-size:14px;font-weight:bold;letter-spacing:0.24px;color:#d4d0c8">Formatting Currently Selected X-Y Plot</div>
<div class="a" style="left:1258px;top:15px;width:21px;height:19px;background:#d4d0c8;border-top:1px solid #fff;border-left:1px solid #fff;border-right:1px solid #404040;border-bottom:1px solid #404040;box-shadow:inset -1px -1px 0 #808080, inset 1px 1px 0 #d4d0c8;"><svg width="21" height="19" style="left:0;top:0"><path d="M5.5,4.0 L14.0,12.5 M14.0,4.0 L5.5,12.5" stroke="#000" stroke-width="2"/></svg></div>
<div class="a" style="left:816px;top:65px;width:462px;height:1px;background:#808080"></div>
<div class="a" style="left:816px;top:66px;width:462px;height:1px;background:#fff"></div>
<div class="a" style="left:818px;top:43px;width:22px;height:21px;background:#e8e6e1;border-top:1px solid #808080;border-left:1px solid #808080;border-right:1px solid #fff;border-bottom:1px solid #fff"></div><svg width="1302" height="1064" style="left:0;top:0"><g transform="translate(821,46)"><rect x="0.5" y="0.5" width="6" height="6" rx="1" fill="#fff" stroke="#4a90dc"/><path d="M2,3.5h3M3.5,2v3" stroke="#000"/><rect x="0.5" y="9.5" width="6" height="6" rx="1" fill="#fff" stroke="#4a90dc"/><path d="M2,12.5h3M3.5,11v3" stroke="#000"/><path d="M8,1.5h4M8,10.5h4" stroke="#303030"/><path d="M8,4h8M8,6.5h8M8,13h8M8,15.5h8" stroke="#70a0b8" stroke-dasharray="1,1"/></g><g transform="translate(843,45)"><text x="3.5" y="8.5" text-anchor="middle" font-family="Liberation Serif" font-size="10" fill="#2850c0">A</text><text x="3.5" y="17" text-anchor="middle" font-family="Liberation Serif" font-size="10" fill="#c02828">Z</text><path d="M12,1v15M9.5,12.5l2.5,4l2.5,-4" stroke="#000" fill="none" stroke-width="1.1"/></g><rect x="867" y="43" width="1" height="21" fill="#808080"/><rect x="868" y="43" width="1" height="21" fill="#fff"/><g transform="translate(873,46)"><rect x="0.5" y="0.5" width="15" height="14" fill="#dedcd6" stroke="#a8a6a0"/><rect x="1" y="1" width="14" height="2" fill="#c8c6c0"/><rect x="3.5" y="6.5" width="9" height="5" fill="none" stroke="#b8b6b0"/><path d="M5,8.5h2M8,8.5h3" stroke="#b0aea8"/></g></svg>
<div class="a" style="left:816px;top:67px;width:461px;height:879px;background:#fff;border:1px solid #808080"></div><div class="a" style="left:817px;top:68px;width:14px;height:775px;background:#d4d0c8"></div><div class="a" style="left:817px;top:68px;width:459px;height:19px;background:#d4d0c8"></div><div class="a" style="left:819px;top:73px;width:9px;height:9px;border:1px solid #000;background:#d4d0c8"></div><div class="a" style="left:821px;top:77px;width:5px;height:1px;background:#000"></div><div class="a t b" style="left:835px;top:70px;height:19px;line-height:19px;font-weight:bold;font-size:14.5px">Внешний вид</div><div class="a" style="left:831px;top:104px;width:445px;height:1px;background:#d4d0c8"></div><div class="a" style="left:819px;top:91px;width:9px;height:9px;border:1px solid #000;background:#fff"></div><div class="a" style="left:821px;top:95px;width:5px;height:1px;background:#000"></div><div class="a t" style="left:835px;top:88px;height:18px;line-height:18px;color:#000">Grid</div><div class="a t b" style="left:1039px;top:87px;height:18px;line-height:18px;font-weight:bold">Chart2DLib.Grid</div><div class="a" style="left:831px;top:122px;width:445px;height:1px;background:#d4d0c8"></div><div class="a t" style="left:849px;top:106px;height:18px;line-height:18px;color:#000">GridColor</div><div class="a" style="left:1037px;top:106px;width:20px;height:15px;border:1px solid #000;background:#c0c0ff"></div><div class="a t b" style="left:1065px;top:105px;height:18px;line-height:18px;font-weight:bold">192; 192; 255</div><div class="a" style="left:831px;top:140px;width:445px;height:1px;background:#d4d0c8"></div><div class="a t" style="left:849px;top:124px;height:18px;line-height:18px;color:#000">GridPattern</div><div class="a t b" style="left:1039px;top:123px;height:18px;line-height:18px;font-weight:bold">Dash</div><div class="a" style="left:831px;top:158px;width:445px;height:1px;background:#d4d0c8"></div><div class="a t" style="left:849px;top:142px;height:18px;line-height:18px;color:#000">GridThickness</div><div class="a t b" style="left:1039px;top:141px;height:18px;line-height:18px;font-weight:bold">1</div><div class="a" style="left:831px;top:176px;width:445px;height:1px;background:#d4d0c8"></div><div class="a t" style="left:849px;top:160px;height:18px;line-height:18px;color:#000">IsXGrid</div><div class="a t b" style="left:1039px;top:159px;height:18px;line-height:18px;font-weight:bold">True</div><div class="a" style="left:831px;top:194px;width:445px;height:1px;background:#d4d0c8"></div><div class="a t" style="left:849px;top:178px;height:18px;line-height:18px;color:#000">IsYGrid</div><div class="a t b" style="left:1039px;top:177px;height:18px;line-height:18px;font-weight:bold">True</div><div class="a" style="left:831px;top:212px;width:445px;height:1px;background:#d4d0c8"></div><div class="a" style="left:819px;top:199px;width:9px;height:9px;border:1px solid #000;background:#fff"></div><div class="a" style="left:821px;top:203px;width:5px;height:1px;background:#000"></div><div class="a t" style="left:835px;top:196px;height:18px;line-height:18px;color:#000">Label</div><div class="a t b" style="left:1039px;top:195px;height:18px;line-height:18px;font-weight:bold">Chart2DLib.XYLabel</div><div class="a" style="left:831px;top:230px;width:445px;height:1px;background:#d4d0c8"></div><div class="a" style="left:833px;top:217px;width:9px;height:9px;border:1px solid #000;background:#fff"></div><div class="a" style="left:835px;top:221px;width:5px;height:1px;background:#000"></div><div class="a" style="left:837px;top:219px;width:1px;height:5px;background:#000"></div><div class="a t" style="left:849px;top:214px;height:18px;line-height:18px;color:#000">LabelFont</div><div class="a t b" style="left:1039px;top:213px;height:18px;line-height:18px;font-weight:bold">Arial; 10,2pt; style=Bold</div><div class="a" style="left:831px;top:248px;width:445px;height:1px;background:#d4d0c8"></div><div class="a t" style="left:849px;top:232px;height:18px;line-height:18px;color:#000">LabelFontColor</div><div class="a" style="left:1037px;top:232px;width:20px;height:15px;border:1px solid #000;background:#4169e1"></div><div class="a t b" style="left:1065px;top:231px;height:18px;line-height:18px;font-weight:bold">RoyalBlue</div><div class="a" style="left:831px;top:266px;width:445px;height:1px;background:#d4d0c8"></div><div class="a" style="left:833px;top:253px;width:9px;height:9px;border:1px solid #000;background:#fff"></div><div class="a" style="left:835px;top:257px;width:5px;height:1px;background:#000"></div><div class="a" style="left:837px;top:255px;width:1px;height:5px;background:#000"></div><div class="a t" style="left:849px;top:250px;height:18px;line-height:18px;color:#000">TickFont</div><div class="a t b" style="left:1039px;top:249px;height:18px;line-height:18px;font-weight:bold">Courier New; 10,2pt; style=Bold</div><div class="a" style="left:831px;top:284px;width:445px;height:1px;background:#d4d0c8"></div><div class="a t" style="left:849px;top:268px;height:18px;line-height:18px;color:#000">TickFontColor</div><div class="a" style="left:1037px;top:268px;width:20px;height:15px;border:1px solid #000;background:#800000"></div><div class="a t b" style="left:1065px;top:267px;height:18px;line-height:18px;font-weight:bold">Maroon</div><div class="a" style="left:831px;top:302px;width:445px;height:1px;background:#d4d0c8"></div><div class="a t" style="left:849px;top:286px;height:18px;line-height:18px;color:#000">XLabel</div><div class="a t b" style="left:1039px;top:285px;height:18px;line-height:18px;font-weight:bold">x</div><div class="a" style="left:831px;top:320px;width:445px;height:1px;background:#d4d0c8"></div><div class="a t" style="left:849px;top:304px;height:18px;line-height:18px;color:#000">Y2Label</div><div class="a t b" style="left:1039px;top:303px;height:18px;line-height:18px;font-weight:bold">y2</div><div class="a" style="left:831px;top:338px;width:445px;height:1px;background:#d4d0c8"></div><div class="a t" style="left:849px;top:322px;height:18px;line-height:18px;color:#000">YLabel</div><div class="a t b" style="left:1039px;top:321px;height:18px;line-height:18px;font-weight:bold">y</div><div class="a" style="left:831px;top:356px;width:445px;height:1px;background:#d4d0c8"></div><div class="a" style="left:819px;top:343px;width:9px;height:9px;border:1px solid #000;background:#fff"></div><div class="a" style="left:821px;top:347px;width:5px;height:1px;background:#000"></div><div class="a t" style="left:835px;top:340px;height:18px;line-height:18px;color:#000">Legend</div><div class="a t b" style="left:1039px;top:339px;height:18px;line-height:18px;font-weight:bold">Chart2DLib.Legend</div><div class="a" style="left:831px;top:374px;width:445px;height:1px;background:#d4d0c8"></div><div class="a t" style="left:849px;top:358px;height:18px;line-height:18px;color:#000">IsBorderVisible</div><div class="a t b" style="left:1039px;top:357px;height:18px;line-height:18px;font-weight:bold">True</div><div class="a" style="left:831px;top:392px;width:445px;height:1px;background:#d4d0c8"></div><div class="a t" style="left:849px;top:376px;height:18px;line-height:18px;color:#000">IsLegendVisible</div><div class="a t b" style="left:1039px;top:375px;height:18px;line-height:18px;font-weight:bold">True</div><div class="a" style="left:831px;top:410px;width:445px;height:1px;background:#d4d0c8"></div><div class="a t" style="left:849px;top:394px;height:18px;line-height:18px;color:#000">LegendBackColor</div><div class="a" style="left:1037px;top:394px;width:20px;height:15px;border:1px solid #000;background:#ffff80"></div><div class="a t b" style="left:1065px;top:393px;height:18px;line-height:18px;font-weight:bold">255; 255; 128</div><div class="a" style="left:831px;top:428px;width:445px;height:1px;background:#d4d0c8"></div><div class="a t" style="left:849px;top:412px;height:18px;line-height:18px;color:#000">LegendBorderColor</div><div class="a" style="left:1037px;top:412px;width:20px;height:15px;border:1px solid #000;background:#ff8080"></div><div class="a t b" style="left:1065px;top:411px;height:18px;line-height:18px;font-weight:bold">255; 128; 128</div><div class="a" style="left:831px;top:446px;width:445px;height:1px;background:#d4d0c8"></div><div class="a" style="left:833px;top:433px;width:9px;height:9px;border:1px solid #000;background:#fff"></div><div class="a" style="left:835px;top:437px;width:5px;height:1px;background:#000"></div><div class="a" style="left:837px;top:435px;width:1px;height:5px;background:#000"></div><div class="a t" style="left:849px;top:430px;height:18px;line-height:18px;color:#000">LegendFont</div><div class="a t b" style="left:1039px;top:429px;height:18px;line-height:18px;font-weight:bold">Arial; 8pt</div><div class="a" style="left:831px;top:464px;width:445px;height:1px;background:#d4d0c8"></div><div class="a t" style="left:849px;top:448px;height:18px;line-height:18px;color:#000">LegendPosition</div><div class="a t b" style="left:1039px;top:447px;height:18px;line-height:18px;font-weight:bold">SouthWest</div><div class="a" style="left:831px;top:482px;width:445px;height:1px;background:#d4d0c8"></div><div class="a t" style="left:849px;top:466px;height:18px;line-height:18px;color:#000">TextColor</div><div class="a" style="left:1037px;top:466px;width:20px;height:15px;border:1px solid #000;background:#000"></div><div class="a t b" style="left:1065px;top:465px;height:18px;line-height:18px;font-weight:bold">Black</div><div class="a" style="left:831px;top:500px;width:445px;height:1px;background:#d4d0c8"></div><div class="a t" style="left:835px;top:484px;height:18px;line-height:18px;color:#000">Points</div><div class="a t b" style="left:1039px;top:483px;height:18px;line-height:18px;font-weight:bold">50</div><div class="a" style="left:831px;top:518px;width:445px;height:1px;background:#d4d0c8"></div><div class="a t" style="left:835px;top:502px;height:18px;line-height:18px;color:#000">Smoothing</div><div class="a t b" style="left:1039px;top:501px;height:18px;line-height:18px;font-weight:bold">True</div><div class="a" style="left:831px;top:536px;width:445px;height:1px;background:#d4d0c8"></div><div class="a" style="left:819px;top:523px;width:9px;height:9px;border:1px solid #000;background:#fff"></div><div class="a" style="left:821px;top:527px;width:5px;height:1px;background:#000"></div><div class="a t" style="left:835px;top:520px;height:18px;line-height:18px;color:#000">Title</div><div class="a t b" style="left:1039px;top:519px;height:18px;line-height:18px;font-weight:bold">Chart2DLib.Title2D</div><div class="a" style="left:831px;top:554px;width:445px;height:1px;background:#d4d0c8"></div><div class="a t" style="left:849px;top:538px;height:18px;line-height:18px;color:#000">Title</div><div class="a t b" style="left:1039px;top:537px;height:18px;line-height:18px;font-weight:bold">X-Y Plot Example</div><div class="a" style="left:831px;top:572px;width:445px;height:1px;background:#d4d0c8"></div><div class="a" style="left:833px;top:559px;width:9px;height:9px;border:1px solid #000;background:#fff"></div><div class="a" style="left:835px;top:563px;width:5px;height:1px;background:#000"></div><div class="a" style="left:837px;top:561px;width:1px;height:5px;background:#000"></div><div class="a t" style="left:849px;top:556px;height:18px;line-height:18px;color:#000">TitleFont</div><div class="a t b" style="left:1039px;top:555px;height:18px;line-height:18px;font-weight:bold">Times New Roman; 18pt</div><div class="a" style="left:831px;top:590px;width:445px;height:1px;background:#d4d0c8"></div><div class="a t" style="left:849px;top:574px;height:18px;line-height:18px;color:#000">TitleFontColor</div><div class="a" style="left:1037px;top:574px;width:20px;height:15px;border:1px solid #000;background:#8080ff"></div><div class="a t b" style="left:1065px;top:573px;height:18px;line-height:18px;font-weight:bold">128; 128; 255</div><div class="a" style="left:831px;top:608px;width:445px;height:1px;background:#d4d0c8"></div><div class="a" style="left:831px;top:591px;width:204px;height:17px;background:#d4d0c8"></div><div class="a t" style="left:835px;top:592px;height:18px;line-height:18px;color:#000">Traces</div><div class="a t b" style="left:1039px;top:591px;height:18px;line-height:18px;font-weight:bold">&lt; List... &gt;</div><div class="a" style="left:831px;top:626px;width:445px;height:1px;background:#d4d0c8"></div><div class="a" style="left:819px;top:613px;width:9px;height:9px;border:1px solid #000;background:#fff"></div><div class="a" style="left:821px;top:617px;width:5px;height:1px;background:#000"></div><div class="a t" style="left:835px;top:610px;height:18px;line-height:18px;color:#000">X-Axis</div><div class="a t b" style="left:1039px;top:609px;height:18px;line-height:18px;font-weight:bold">Chart2DLib.XAxis</div><div class="a" style="left:831px;top:644px;width:445px;height:1px;background:#d4d0c8"></div><div class="a t" style="left:849px;top:628px;height:18px;line-height:18px;color:#000">XLimMax</div><div class="a t b" style="left:1039px;top:627px;height:18px;line-height:18px;font-weight:bold">6</div><div class="a" style="left:831px;top:662px;width:445px;height:1px;background:#d4d0c8"></div><div class="a t" style="left:849px;top:646px;height:18px;line-height:18px;color:#000">XLimMin</div><div class="a t b" style="left:1039px;top:645px;height:18px;line-height:18px;font-weight:bold">0</div><div class="a" style="left:831px;top:680px;width:445px;height:1px;background:#d4d0c8"></div><div class="a t" style="left:849px;top:664px;height:18px;line-height:18px;color:#000">XTick</div><div class="a t b" style="left:1039px;top:663px;height:18px;line-height:18px;font-weight:bold">2,5</div><div class="a" style="left:831px;top:698px;width:445px;height:1px;background:#d4d0c8"></div><div class="a" style="left:819px;top:685px;width:9px;height:9px;border:1px solid #000;background:#fff"></div><div class="a" style="left:821px;top:689px;width:5px;height:1px;background:#000"></div><div class="a t" style="left:835px;top:682px;height:18px;line-height:18px;color:#000">Y2-Axis</div><div class="a t b" style="left:1039px;top:681px;height:18px;line-height:18px;font-weight:bold">Chart2DLib.Y2Axis</div><div class="a" style="left:831px;top:716px;width:445px;height:1px;background:#d4d0c8"></div><div class="a t" style="left:849px;top:700px;height:18px;line-height:18px;color:#000">IsY2Axis</div><div class="a t b" style="left:1039px;top:699px;height:18px;line-height:18px;font-weight:bold">True</div><div class="a" style="left:831px;top:734px;width:445px;height:1px;background:#d4d0c8"></div><div class="a t" style="left:849px;top:718px;height:18px;line-height:18px;color:#000">Y2LimMax</div><div class="a t b" style="left:1039px;top:717px;height:18px;line-height:18px;font-weight:bold">4</div><div class="a" style="left:831px;top:752px;width:445px;height:1px;background:#d4d0c8"></div><div class="a t" style="left:849px;top:736px;height:18px;line-height:18px;color:#000">Y2LimMin</div><div class="a t b" style="left:1039px;top:735px;height:18px;line-height:18px;font-weight:bold">-6</div><div class="a" style="left:831px;top:770px;width:445px;height:1px;background:#d4d0c8"></div><div class="a t" style="left:849px;top:754px;height:18px;line-height:18px;color:#000">Y2Tick</div><div class="a t b" style="left:1039px;top:753px;height:18px;line-height:18px;font-weight:bold">1</div><div class="a" style="left:831px;top:788px;width:445px;height:1px;background:#d4d0c8"></div><div class="a" style="left:819px;top:775px;width:9px;height:9px;border:1px solid #000;background:#fff"></div><div class="a" style="left:821px;top:779px;width:5px;height:1px;background:#000"></div><div class="a t" style="left:835px;top:772px;height:18px;line-height:18px;color:#000">Y-Axis</div><div class="a t b" style="left:1039px;top:771px;height:18px;line-height:18px;font-weight:bold">Chart2DLib.YAxis</div><div class="a" style="left:831px;top:806px;width:445px;height:1px;background:#d4d0c8"></div><div class="a t" style="left:849px;top:790px;height:18px;line-height:18px;color:#000">YLimMax</div><div class="a t b" style="left:1039px;top:789px;height:18px;line-height:18px;font-weight:bold">1</div><div class="a" style="left:831px;top:824px;width:445px;height:1px;background:#d4d0c8"></div><div class="a t" style="left:849px;top:808px;height:18px;line-height:18px;color:#000">YLimMin</div><div class="a t b" style="left:1039px;top:807px;height:18px;line-height:18px;font-weight:bold">-1</div><div class="a" style="left:831px;top:842px;width:445px;height:1px;background:#d4d0c8"></div><div class="a t" style="left:849px;top:826px;height:18px;line-height:18px;color:#000">YTick</div><div class="a t b" style="left:1039px;top:825px;height:18px;line-height:18px;font-weight:bold">0,5</div><div class="a" style="left:1035px;top:87px;width:1px;height:756px;background:#d4d0c8"></div>
<div class="a" style="left:816px;top:948px;width:461px;height:59px;background:#d4d0c8;border:1px solid #808080"></div>
<div class="a t b" style="left:822px;top:951px;height:18px;line-height:18px;font-weight:bold">Traces</div>
<div class="a" style="left:1180px;top:1020px;width:88px;height:28px;background:#d4d0c8;border-top:1px solid #fff;border-left:1px solid #fff;border-right:1px solid #404040;border-bottom:1px solid #404040;box-shadow:inset -1px -1px 0 #808080, inset 1px 1px 0 #d4d0c8;"><div class="a t" style="left:0;top:0;width:86px;height:26px;line-height:26px;text-align:center">OK</div></div>
<div class="a" style="left:112px;top:612px;width:706px;height:452px;background:#d4d0c8;border-top:1px solid #d4d0c8;border-left:1px solid #d4d0c8;border-right:1px solid #404040;border-bottom:1px solid #404040;box-shadow:inset 1px 1px 0 #fff, inset -1px -1px 0 #808080"></div>
<div class="a" style="left:116px;top:616px;width:698px;height:23px;background:linear-gradient(to right,#0a246a,#a6caf0)"></div>
<div class="a t b" style="left:117px;top:617px;height:21px;line-height:21px;font-size:14px;font-weight:bold;letter-spacing:0.46px;color:#fff">Редактор коллекции DataSeries</div>
<div class="a" style="left:768px;top:618px;width:21px;height:19px;background:#d4d0c8;border-top:1px solid #fff;border-left:1px solid #fff;border-right:1px solid #404040;border-bottom:1px solid #404040;box-shadow:inset -1px -1px 0 #808080, inset 1px 1px 0 #d4d0c8;"><div class="a t" style="left:0;top:0;width:19px;height:17px;line-height:18px;text-align:center;font-weight:bold;font-size:17px">?</div></div>
<div class="a" style="left:791px;top:618px;width:21px;height:19px;background:#d4d0c8;border-top:1px solid #fff;border-left:1px solid #fff;border-right:1px solid #404040;border-bottom:1px solid #404040;box-shadow:inset -1px -1px 0 #808080, inset 1px 1px 0 #d4d0c8;"><svg width="21" height="19" style="left:0;top:0"><path d="M5.5,4.0 L14.0,12.5 M14.0,4.0 L5.5,12.5" stroke="#000" stroke-width="2"/></svg></div>
<div class="a t" style="left:140px;top:656px;height:18px;line-height:18px;font-size:13.6px">Члены:</div>
<div class="a t" style="left:455px;top:656px;height:18px;line-height:18px;font-size:14px">Свойства Chart2DLib.DataSeries:</div>
<div class="a" style="left:136px;top:676px;width:247px;height:279px;background:#fff;border-top:1px solid #808080;border-left:1px solid #808080;border-right:1px solid #fff;border-bottom:1px solid #fff;box-shadow:inset 1px 1px 0 #404040, inset -1px -1px 0 #d4d0c8;"></div>
<div class="a" style="left:154px;top:678px;width:228px;height:17px;background:#0a246a"></div>
<div class="a" style="left:138px;top:678px;width:16px;height:17px;background:#d4d0c8;border-top:1px solid #fff;border-left:1px solid #fff;border-right:1px solid #404040;border-bottom:1px solid #404040;box-shadow:inset -1px -1px 0 #808080, inset 1px 1px 0 #d4d0c8;"><div class="a t" style="left:0;top:0;width:14px;height:15px;line-height:15px;text-align:center;font-size:13px">0</div></div>
<div class="a t" style="left:158px;top:678px;height:17px;line-height:17px;font-size:13.2px;color:#fff">Chart2DLib.DataSeries</div>
<div class="a" style="left:138px;top:695px;width:16px;height:17px;background:#d4d0c8;border-top:1px solid #fff;border-left:1px solid #fff;border-right:1px solid #404040;border-bottom:1px solid #404040;box-shadow:inset -1px -1px 0 #808080, inset 1px 1px 0 #d4d0c8;"><div class="a t" style="left:0;top:0;width:14px;height:15px;line-height:15px;text-align:center;font-size:13px">1</div></div>
<div class="a t" style="left:158px;top:695px;height:17px;line-height:17px;font-size:13.2px;color:#000">Chart2DLib.DataSeries</div>
<div class="a" style="left:138px;top:712px;width:16px;height:17px;background:#d4d0c8;border-top:1px solid #fff;border-left:1px solid #fff;border-right:1px solid #404040;border-bottom:1px solid #404040;box-shadow:inset -1px -1px 0 #808080, inset 1px 1px 0 #d4d0c8;"><div class="a t" style="left:0;top:0;width:14px;height:15px;line-height:15px;text-align:center;font-size:13px">2</div></div>
<div class="a t" style="left:158px;top:712px;height:17px;line-height:17px;font-size:13.2px;color:#000">Chart2DLib.DataSeries</div>
<div class="a" style="left:138px;top:729px;width:16px;height:17px;background:#d4d0c8;border-top:1px solid #fff;border-left:1px solid #fff;border-right:1px solid #404040;border-bottom:1px solid #404040;box-shadow:inset -1px -1px 0 #808080, inset 1px 1px 0 #d4d0c8;"><div class="a t" style="left:0;top:0;width:14px;height:15px;line-height:15px;text-align:center;font-size:13px">3</div></div>
<div class="a t" style="left:158px;top:729px;height:17px;line-height:17px;font-size:13.2px;color:#000">Chart2DLib.DataSeries</div>
<div class="a" style="left:392px;top:676px;width:32px;height:30px;background:#d4d0c8;border-top:1px solid #fff;border-left:1px solid #fff;border-right:1px solid #404040;border-bottom:1px solid #404040;box-shadow:inset -1px -1px 0 #808080, inset 1px 1px 0 #d4d0c8;"><svg width="30" height="28"><path d="M15,8 L10.5,13 L13.5,13 L13.5,18 L16.5,18 L16.5,13 L19.5,13Z" fill="#000"/></svg></div>
<div class="a" style="left:392px;top:711px;width:32px;height:30px;background:#d4d0c8;border-top:1px solid #fff;border-left:1px solid #fff;border-right:1px solid #404040;border-bottom:1px solid #404040;box-shadow:inset -1px -1px 0 #808080, inset 1px 1px 0 #d4d0c8;"><svg width="30" height="28"><path d="M15,20 L10.5,15 L13.5,15 L13.5,10 L16.5,10 L16.5,15 L19.5,15Z" fill="#000"/></svg></div>
<div class="a" style="left:136px;top:967px;width:118px;height:28px;background:#d4d0c8;border-top:1px solid #fff;border-left:1px solid #fff;border-right:1px solid #404040;border-bottom:1px solid #404040;box-shadow:inset -1px -1px 0 #808080, inset 1px 1px 0 #d4d0c8;"><div class="a t" style="left:0;top:0;width:116px;height:26px;line-height:26px;text-align:center">Добавить</div></div>
<div class="a" style="left:262px;top:967px;width:118px;height:28px;background:#d4d0c8;border-top:1px solid #fff;border-left:1px solid #fff;border-right:1px solid #404040;border-bottom:1px solid #404040;box-shadow:inset -1px -1px 0 #808080, inset 1px 1px 0 #d4d0c8;"><div class="a t" style="left:0;top:0;width:116px;height:26px;line-height:26px;text-align:center">Удалить</div></div>
<div class="a" style="left:455px;top:679px;width:22px;height:21px;background:#e8e6e1;border-top:1px solid #808080;border-left:1px solid #808080;border-right:1px solid #fff;border-bottom:1px solid #fff"></div><svg width="1302" height="1064" style="left:0;top:0"><g transform="translate(458,682)"><rect x="0.5" y="0.5" width="6" height="6" rx="1" fill="#fff" stroke="#4a90dc"/><path d="M2,3.5h3M3.5,2v3" stroke="#000"/><rect x="0.5" y="9.5" width="6" height="6" rx="1" fill="#fff" stroke="#4a90dc"/><path d="M2,12.5h3M3.5,11v3" stroke="#000"/><path d="M8,1.5h4M8,10.5h4" stroke="#303030"/><path d="M8,4h8M8,6.5h8M8,13h8M8,15.5h8" stroke="#70a0b8" stroke-dasharray="1,1"/></g><g transform="translate(480,681)"><text x="3.5" y="8.5" text-anchor="middle" font-family="Liberation Serif" font-size="10" fill="#2850c0">A</text><text x="3.5" y="17" text-anchor="middle" font-family="Liberation Serif" font-size="10" fill="#c02828">Z</text><path d="M12,1v15M9.5,12.5l2.5,4l2.5,-4" stroke="#000" fill="none" stroke-width="1.1"/></g><rect x="504" y="679" width="1" height="21" fill="#808080"/><rect x="505" y="679" width="1" height="21" fill="#fff"/><g transform="translate(510,682)"><rect x="0.5" y="0.5" width="15" height="14" fill="#dedcd6" stroke="#a8a6a0"/><rect x="1" y="1" width="14" height="2" fill="#c8c6c0"/><rect x="3.5" y="6.5" width="9" height="5" fill="none" stroke="#b8b6b0"/><path d="M5,8.5h2M8,8.5h3" stroke="#b0aea8"/></g></svg>
<div class="a" style="left:452px;top:702px;width:342px;height:296px;background:#fff;border:1px solid #808080"></div><div class="a" style="left:453px;top:703px;width:14px;height:289px;background:#d4d0c8"></div><div class="a" style="left:453px;top:703px;width:340px;height:19px;background:#d4d0c8"></div><div class="a" style="left:455px;top:708px;width:9px;height:9px;border:1px solid #000;background:#d4d0c8"></div><div class="a" style="left:457px;top:712px;width:5px;height:1px;background:#000"></div><div class="a t b" style="left:471px;top:705px;height:19px;line-height:19px;font-weight:bold;font-size:14.5px">Внешний вид</div><div class="a" style="left:467px;top:739px;width:326px;height:1px;background:#d4d0c8"></div><div class="a t" style="left:471px;top:723px;height:18px;line-height:18px;color:#000">IsY2Data</div><div class="a t b" style="left:614px;top:722px;height:18px;line-height:18px;font-weight:bold">False</div><div class="a" style="left:467px;top:757px;width:326px;height:1px;background:#d4d0c8"></div><div class="a" style="left:455px;top:744px;width:9px;height:9px;border:1px solid #000;background:#fff"></div><div class="a" style="left:457px;top:748px;width:5px;height:1px;background:#000"></div><div class="a t" style="left:471px;top:741px;height:18px;line-height:18px;color:#000">LineStyle</div><div class="a t b" style="left:614px;top:740px;height:18px;line-height:18px;font-weight:bold">Chart2DLib.LineStyle</div><div class="a" style="left:467px;top:775px;width:326px;height:1px;background:#d4d0c8"></div><div class="a t" style="left:485px;top:759px;height:18px;line-height:18px;color:#000">IsVisible</div><div class="a t b" style="left:614px;top:758px;height:18px;line-height:18px;font-weight:bold">True</div><div class="a" style="left:467px;top:793px;width:326px;height:1px;background:#d4d0c8"></div><div class="a t" style="left:485px;top:777px;height:18px;line-height:18px;color:#000">LineColor</div><div class="a" style="left:612px;top:777px;width:20px;height:15px;border:1px solid #000;background:#0000ff"></div><div class="a t b" style="left:640px;top:776px;height:18px;line-height:18px;font-weight:bold">Blue</div><div class="a" style="left:467px;top:811px;width:326px;height:1px;background:#d4d0c8"></div><div class="a t" style="left:485px;top:795px;height:18px;line-height:18px;color:#000">Pattern</div><div class="a t b" style="left:614px;top:794px;height:18px;line-height:18px;font-weight:bold">Solid</div><div class="a" style="left:467px;top:829px;width:326px;height:1px;background:#d4d0c8"></div><div class="a t" style="left:485px;top:813px;height:18px;line-height:18px;color:#000">PlotMethod</div><div class="a t b" style="left:614px;top:812px;height:18px;line-height:18px;font-weight:bold">Lines</div><div class="a" style="left:467px;top:847px;width:326px;height:1px;background:#d4d0c8"></div><div class="a t" style="left:485px;top:831px;height:18px;line-height:18px;color:#000">Thickness</div><div class="a t b" style="left:614px;top:830px;height:18px;line-height:18px;font-weight:bold">1</div><div class="a" style="left:467px;top:865px;width:326px;height:1px;background:#d4d0c8"></div><div class="a t" style="left:471px;top:849px;height:18px;line-height:18px;color:#000">PointList</div><div class="a t b" style="left:614px;top:848px;height:18px;line-height:18px;font-weight:bold">(Коллекция)</div><div class="a" style="left:467px;top:883px;width:326px;height:1px;background:#d4d0c8"></div><div class="a t" style="left:471px;top:867px;height:18px;line-height:18px;color:#000">SeriesName</div><div class="a t b" style="left:614px;top:866px;height:18px;line-height:18px;font-weight:bold">1</div><div class="a" style="left:467px;top:901px;width:326px;height:1px;background:#d4d0c8"></div><div class="a" style="left:467px;top:884px;width:143px;height:17px;background:#0a246a"></div><div class="a" style="left:455px;top:888px;width:9px;height:9px;border:1px solid #000;background:#fff"></div><div class="a" style="left:457px;top:892px;width:5px;height:1px;background:#000"></div><div class="a t" style="left:471px;top:885px;height:18px;line-height:18px;color:#fff">SymbolStyle</div><div class="a t b" style="left:614px;top:884px;height:18px;line-height:18px;font-weight:bold">Chart2DLib.SymbolStyle</div><div class="a" style="left:467px;top:919px;width:326px;height:1px;background:#d4d0c8"></div><div class="a t" style="left:485px;top:903px;height:18px;line-height:18px;color:#000">BorderColor</div><div class="a" style="left:612px;top:903px;width:20px;height:15px;border:1px solid #000;background:#ff0000"></div><div class="a t b" style="left:640px;top:902px;height:18px;line-height:18px;font-weight:bold">Red</div><div class="a" style="left:467px;top:937px;width:326px;height:1px;background:#d4d0c8"></div><div class="a t" style="left:485px;top:921px;height:18px;line-height:18px;color:#000">BorderThickness</div><div class="a t b" style="left:614px;top:920px;height:18px;line-height:18px;font-weight:bold">1</div><div class="a" style="left:467px;top:955px;width:326px;height:1px;background:#d4d0c8"></div><div class="a t" style="left:485px;top:939px;height:18px;line-height:18px;color:#000">FillColor</div><div class="a" style="left:612px;top:939px;width:20px;height:15px;border:1px solid #000;background:#ffff00"></div><div class="a t b" style="left:640px;top:938px;height:18px;line-height:18px;font-weight:bold">Yellow</div><div class="a" style="left:467px;top:973px;width:326px;height:1px;background:#d4d0c8"></div><div class="a t" style="left:485px;top:957px;height:18px;line-height:18px;color:#000">SymbolSize</div><div class="a t b" style="left:614px;top:956px;height:18px;line-height:18px;font-weight:bold">10</div><div class="a" style="left:467px;top:991px;width:326px;height:1px;background:#d4d0c8"></div><div class="a t" style="left:485px;top:975px;height:18px;line-height:18px;color:#000">SymbolType</div><div class="a t b" style="left:614px;top:974px;height:18px;line-height:18px;font-weight:bold">Box</div><div class="a" style="left:610px;top:722px;width:1px;height:270px;background:#d4d0c8"></div>
<div class="a" style="left:582px;top:1011px;width:100px;height:29px;border:1px solid #000"><div class="a" style="left:0px;top:0px;width:98px;height:27px;background:#d4d0c8;border-top:1px solid #fff;border-left:1px solid #fff;border-right:1px solid #404040;border-bottom:1px solid #404040;box-shadow:inset -1px -1px 0 #808080, inset 1px 1px 0 #d4d0c8;"><div class="a t" style="left:0;top:0;width:96px;height:25px;line-height:25px;text-align:center">OK</div></div></div>
<div class="a" style="left:690px;top:1011px;width:100px;height:29px;background:#d4d0c8;border-top:1px solid #fff;border-left:1px solid #fff;border-right:1px solid #404040;border-bottom:1px solid #404040;box-shadow:inset -1px -1px 0 #808080, inset 1px 1px 0 #d4d0c8;"><div class="a t" style="left:0;top:0;width:98px;height:27px;line-height:27px;text-align:center">Отмена</div></div>
<svg width="1302" height="1064" style="left:0;top:0"><path d="M812,1047 L800,1059 M812,1051 L804,1059 M812,1055 L808,1059" stroke="#fff" stroke-width="1"/><path d="M813,1048 L801,1060 M813,1052 L805,1060 M813,1056 L809,1060" stroke="#808080" stroke-width="1.5"/></svg>
<svg width="1302" height="1064" style="left:0;top:0"><defs><linearGradient id="gdoc" x1="0" y1="0" x2="1" y2="1"><stop offset="0" stop-color="#fff"/><stop offset="1" stop-color="#d8dbe8"/></linearGradient><linearGradient id="gfold" x1="0" y1="0" x2="1" y2="1"><stop offset="0" stop-color="#7fb8f0"/><stop offset="0.6" stop-color="#1650d8"/><stop offset="1" stop-color="#0830a8"/></linearGradient><linearGradient id="gpaste" x1="0" y1="0" x2="0" y2="1"><stop offset="0" stop-color="#ffe070"/><stop offset="1" stop-color="#e08010"/></linearGradient><radialGradient id="gpal" cx="0.4" cy="0.4" r="0.7"><stop offset="0" stop-color="#ffe080"/><stop offset="1" stop-color="#f09020"/></radialGradient><linearGradient id="gfun" x1="0" y1="0" x2="0" y2="1"><stop offset="0" stop-color="#9cc4ec"/><stop offset="1" stop-color="#4a7cc0"/></linearGradient></defs><path d="M7.5,56.5 h9 l4.5,4.5 v11 h-13.5z" fill="url(#gdoc)" stroke="#9a9ea8"/><path d="M16.5,56.5 v4.5 h4.5" fill="#e8e8ec" stroke="#9a9ea8"/><path d="M30.5,60.5 h5 l1,1.5 h6 v10 h-12z" fill="#9cc8f4" stroke="#2050c0"/><path d="M35,66 l5,-8 l5,3 l-3,6z" fill="#fff" stroke="#7090c0" stroke-width="0.8"/><path d="M30.5,71.5 l3,-8 h12.5 l-3,8z" fill="url(#gfold)" stroke="#1040b0"/><rect x="54" y="57" width="14" height="14" rx="1" fill="#1c2a6c"/><rect x="57" y="57.5" width="8" height="5" fill="#c8cce8"/><rect x="56" y="64.5" width="10" height="6.5" fill="#b8bcdc"/><rect x="58" y="58" width="2" height="2" fill="#1c2a6c"/><rect x="79.5" y="56.5" width="9" height="5" fill="#fff" stroke="#606060"/><path d="M76.5,62.5 h15 v6 h-15z" fill="#e6e6e6" stroke="#505050"/><rect x="78" y="66" width="12" height="2" fill="#202020"/><rect x="79.5" y="68.5" width="9" height="3" fill="#fff" stroke="#606060"/><rect x="78" y="63.5" width="1.5" height="1.5" fill="#20a020"/><rect x="99" y="58" width="1" height="14" fill="#a0a0a0"/><rect x="100" y="58" width="1" height="14" fill="#fff"/><g stroke="#b8b8b8" fill="none" stroke-width="1.5"><path d="M111,67 L119,57 M114,67 L108,57"/><circle cx="109" cy="69" r="2.5"/><circle cx="116" cy="69" r="2.5"/></g><path d="M128.5,56.5 h6 l3,3 v8 h-9z" fill="#e8e8e8" stroke="#c0c0c0"/><path d="M133.5,60.5 h6 l3,3 v8 h-9z" fill="#ececec" stroke="#c0c0c0"/><rect x="151.5" y="58.5" width="10" height="12" rx="1" fill="url(#gpaste)" stroke="#b06000"/><rect x="154" y="56.5" width="5" height="3" fill="#fff" stroke="#808080"/><path d="M157.5,61.5 h6 l3,3 v7 h-9z" fill="#f4f4fc" stroke="#8080a8"/><rect x="174" y="58" width="1" height="14" fill="#a0a0a0"/><rect x="175" y="58" width="1" height="14" fill="#fff"/><path d="M181,63 l5,-4 v2.5 c5,0 9,2 9,7 c-2,-3 -5,-3.5 -9,-3.5 v2.5z" fill="#b8b8b8"/><path d="M218,63 l-5,-4 v2.5 c-5,0 -9,2 -9,7 c2,-3 5,-3.5 9,-3.5 v2.5z" fill="#b8b8b8"/><rect x="226" y="58" width="1" height="14" fill="#a0a0a0"/><rect x="227" y="58" width="1" height="14" fill="#fff"/><rect x="230.5" y="53.5" width="44" height="24" fill="#fff" stroke="#0a246a"/><rect x="259" y="54" width="15" height="23" fill="#d4d0c8"/><rect x="258.5" y="54" width="1" height="23" fill="#0a246a"/><path d="M263,64 h6 l-3,3z" fill="#000"/><rect x="233" y="56" width="16" height="17" fill="#0a246a"/><text x="233" y="70" font-family="Liberation Sans" font-size="15" fill="#fff">10</text><rect x="280" y="68" width="15" height="3.5" fill="#c0c0c0"/><text x="287.5" y="68.3" text-anchor="middle" font-family="Liberation Serif" font-weight="bold" font-size="19" fill="#1c60c0">A</text><path d="M310,57 c5,0 8.5,3 8.5,7 c0,4 -3,7 -7,7 c-3,0 -3.5,-2 -5,-3.5 c-1.5,-1.5 -4.5,-1 -4.5,-4 c0,-3.5 3.5,-6.5 8,-6.5z" fill="url(#gpal)" stroke="#c07020" stroke-width="0.8"/><circle cx="305" cy="61" r="1.3" fill="#fff"/><circle cx="308.5" cy="59.5" r="1.3" fill="#3aa0ff"/><circle cx="312.5" cy="59.8" r="1.3" fill="#ff5050"/><circle cx="315.5" cy="63" r="1.3" fill="#ffd020"/><circle cx="315" cy="67" r="1.5" fill="#30c030"/><circle cx="311" cy="68.5" r="1.5" fill="#c080ff"/><rect x="327" y="58" width="11" height="11" fill="none" stroke="#000" stroke-width="2.5"/><path d="M339.5,60 v10.5 h-11" stroke="#a0a0a0" fill="none"/><rect x="348" y="58" width="1" height="14" fill="#a0a0a0"/><rect x="349" y="58" width="1" height="14" fill="#fff"/><rect x="355.5" y="60.5" width="3" height="3" fill="#c8c8c8" stroke="#909090"/><rect x="360.5" y="59.5" width="2" height="8" fill="#c8c8c8" stroke="#909090"/><rect x="364.5" y="60.5" width="4" height="5" fill="#c8c8c8" stroke="#909090"/><rect x="381.5" y="57.5" width="3" height="3" fill="#c8c8c8" stroke="#909090"/><rect x="381.5" y="62.5" width="8" height="2" fill="#c8c8c8" stroke="#909090"/><rect x="381.5" y="66.5" width="6" height="4" fill="#c8c8c8" stroke="#909090"/><rect x="400" y="58" width="1" height="14" fill="#a0a0a0"/><rect x="401" y="58" width="1" height="14" fill="#fff"/><text x="405" y="69" font-family="Liberation Serif" font-style="italic" font-size="12.5" fill="#000">f(x)</text><path d="M429,57 h16 l-6,6.5 v7.5 h-4 v-7.5z" fill="url(#gfun)" stroke="#6a90c0" stroke-width="0.8"/><path d="M452,63 l5,-4 v10 z" fill="#b8a8e8" stroke="#6050b8" stroke-width="0.8"/><circle cx="462" cy="67" r="4.5" fill="#fff" stroke="#3040c0"/><text x="462" y="70" text-anchor="middle" font-family="Liberation Sans" font-weight="bold" font-size="8" fill="#3040c0">?</text><rect x="458" y="52" width="20" height="12" fill="#fbe4e8" opacity="0.9"/><rect x="458" y="52" width="10" height="7" fill="#c8d0f4"/><path d="M468,54.5 h10 M468,57.5 h10 M458,60.5 h20" stroke="#f6b8c0"/><rect x="476" y="58" width="1" height="14" fill="#a0a0a0"/><rect x="477" y="58" width="1" height="14" fill="#fff"/><path d="M482,63 c0,-4 3,-6.5 7,-6.5 c2,0 3.5,0.8 4.5,2 l2,-2 v6 h-6 l2,-2 c-0.8,-0.8 -1.5,-1.2 -2.5,-1.2 c-2,0 -3.5,1.5 -3.5,3.7z" fill="#20b030" stroke="#087018" stroke-width="0.6"/><path d="M496,65 c0,4 -3,6.5 -7,6.5 c-2,0 -3.5,-0.8 -4.5,-2 l-2,2 v-6 h6 l-2,2 c0.8,0.8 1.5,1.2 2.5,1.2 c2,0 3.5,-1.5 3.5,-3.7z" fill="#20b030" stroke="#087018" stroke-width="0.6"/><path d="M508,56.5 h6 l4.5,4.5 v6 l-4.5,4.5 h-6 l-4.5,-4.5 v-6z" fill="#c4c4c4" stroke="#a8a8a8"/><path d="M508.5,61 l5,5 M513.5,61 l-5,5" stroke="#fff" stroke-width="2"/><rect x="527" y="58" width="1" height="14" fill="#a0a0a0"/><rect x="528" y="58" width="1" height="14" fill="#fff"/><rect x="534.5" y="57.5" width="13" height="13" fill="#fff" stroke="#1050c0"/><rect x="535" y="58" width="12" height="2.5" fill="#3a80e0"/><rect x="536.5" y="62.5" width="2" height="2" fill="#60c060" stroke="#208020" stroke-width="0.5"/><rect x="536.5" y="66.5" width="2" height="2" fill="#60c060" stroke="#208020" stroke-width="0.5"/><path d="M540,63.5 h5 M540,67.5 h5" stroke="#303030"/><rect x="4" y="53" width="2" height="2" fill="#404040"/></svg>
<svg width="1302" height="1064" style="left:0;top:0"><rect x="1296" y="1049" width="2" height="2" fill="#fff"/><rect x="1295" y="1048" width="2" height="2" fill="#808080"/><rect x="1292" y="1053" width="2" height="2" fill="#fff"/><rect x="1291" y="1052" width="2" height="2" fill="#808080"/><rect x="1296" y="1053" width="2" height="2" fill="#fff"/><rect x="1295" y="1052" width="2" height="2" fill="#808080"/><rect x="1288" y="1057" width="2" height="2" fill="#fff"/><rect x="1287" y="1056" width="2" height="2" fill="#808080"/><rect x="1292" y="1057" width="2" height="2" fill="#fff"/><rect x="1291" y="1056" width="2" height="2" fill="#808080"/><rect x="1296" y="1057" width="2" height="2" fill="#fff"/><rect x="1295" y="1056" width="2" height="2" fill="#808080"/></svg>
<svg width="1302" height="1064" style="left:0;top:0"><path d="M1280,1045 L1268,1057 M1280,1049 L1272,1057 M1280,1053 L1276,1057" stroke="#fff" stroke-width="1"/><path d="M1281,1046 L1269,1058 M1281,1050 L1273,1058 M1281,1054 L1277,1058" stroke="#808080" stroke-width="1.5"/></svg></body></html>
